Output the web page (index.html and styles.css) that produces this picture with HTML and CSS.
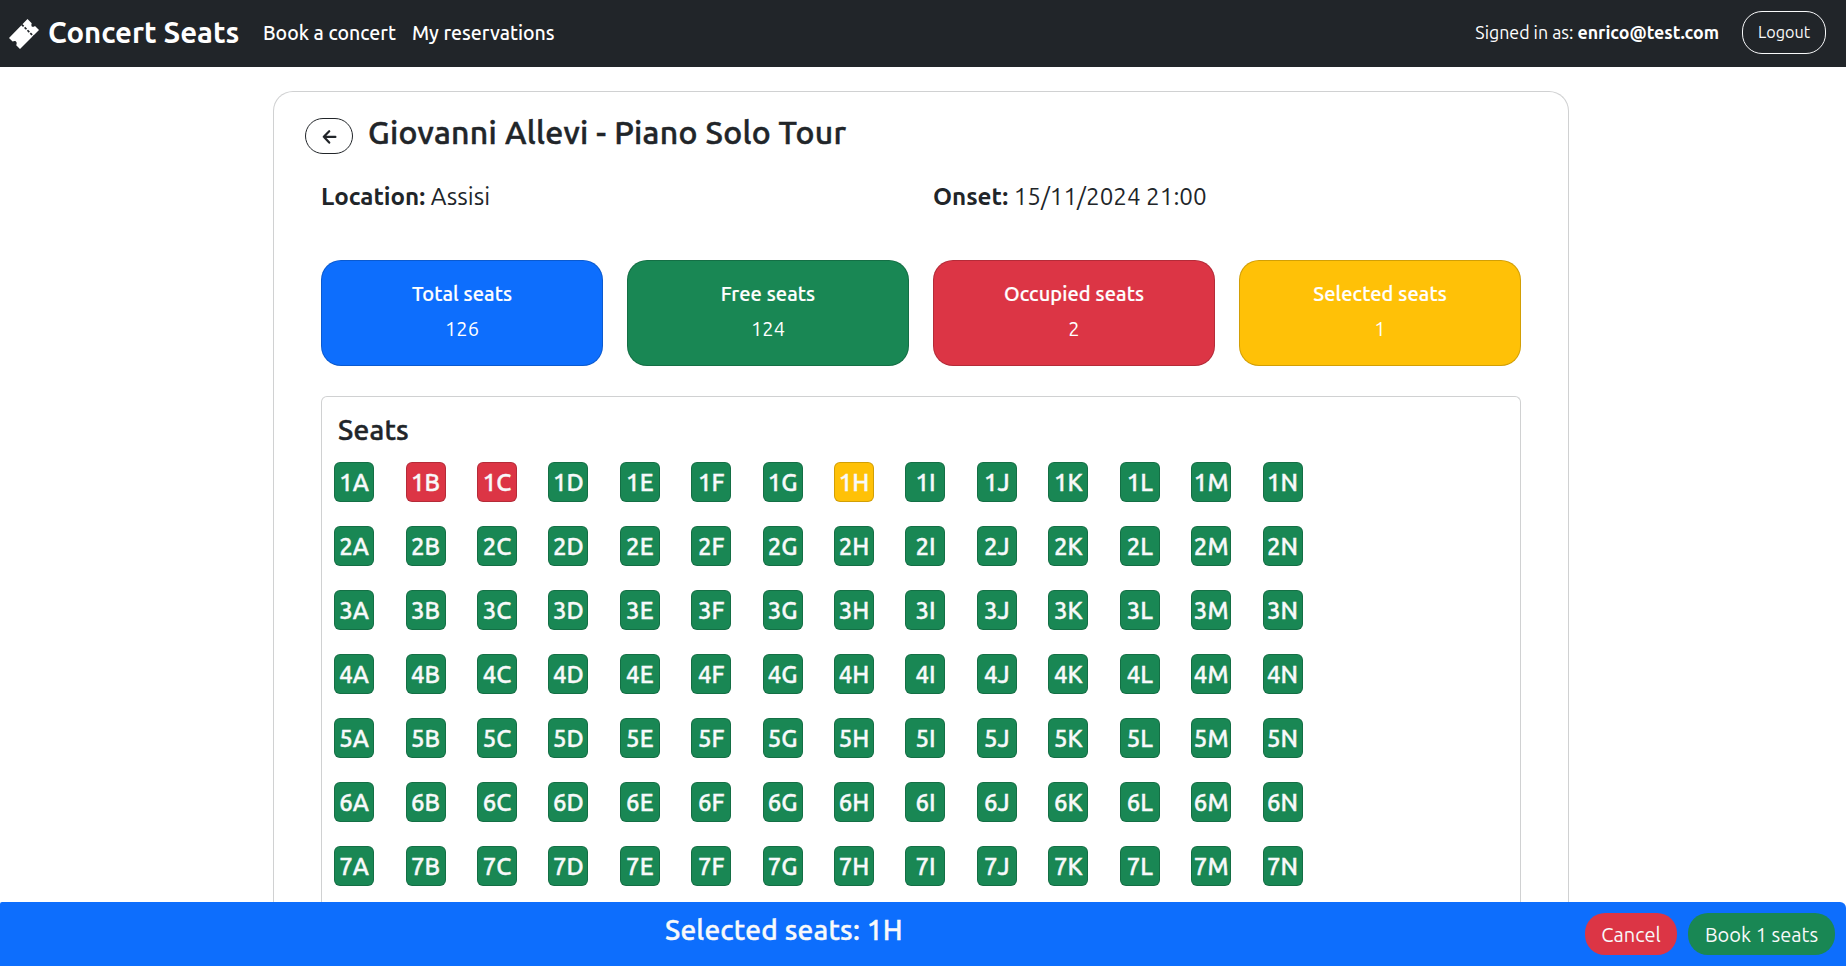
FILE: index.html
```
<!DOCTYPE html>
<html lang="en">
<head>
<meta charset="utf-8">
<title>Concert Seats</title>
<link rel="stylesheet" href="styles.css">
</head>
<body>
<header class="navbar">
  <svg class="brand-icon" viewBox="0 0 30 30"><path d="M18.5 0L22.7 4.2C21.6 7.6 23.4 8.8 26 7L30 11L11 30L7.2 26.2C8.8 23 6.4 21 3.6 22.6L0 19Z" fill="#fff"/><path d="M12.8 5.6L24.8 17.6" stroke="#212529" stroke-width="1.7" stroke-dasharray="2.6 1.4"/></svg>
  <span class="brand">Concert Seats</span>
  <nav class="links"><a class="link-book">Book a concert</a><a class="link-mine">My reservations</a></nav>
  <span class="signed">Signed in as: <b>enrico@test.com</b></span>
  <button class="logout">Logout</button>
</header>
<main class="concert">
  <div class="heading">
    <button class="back"><svg viewBox="0 0 16 16"><path d="M8.2 3.2L2.8 8.8L8.2 14.6M3 8.9H14.4" fill="none" stroke="#212529" stroke-width="2.2" stroke-linecap="round" stroke-linejoin="round"/></svg></button>
    <h2 class="title">Giovanni Allevi - Piano Solo Tour</h2>
  </div>
  <div class="info">
    <div class="info-item"><b>Location:</b> Assisi</div>
    <div class="info-item"><b>Onset:</b> 15/11/2024 21:00</div>
  </div>
  <div class="stats">
    <div class="stat total"><div class="label">Total seats</div><div class="value">126</div></div>
    <div class="stat free"><div class="label">Free seats</div><div class="value">124</div></div>
    <div class="stat occupied"><div class="label">Occupied seats</div><div class="value">2</div></div>
    <div class="stat selected"><div class="label">Selected seats</div><div class="value">1</div></div>
  </div>
  <section class="seats">
    <h3 class="seats-title">Seats</h3>
    <div class="grid" id="grid"></div>
  </section>
</main>
<footer class="bar">
  <div class="bar-text">Selected seats: 1H</div>
  <button class="pill cancel">Cancel</button>
  <button class="pill book">Book 1 seats</button>
</footer>
<script src="seats.js"></script>
</body>
</html>
```
FILE: styles.css
```
* { box-sizing: border-box; }
body { margin: 0; height: 966px; overflow: hidden; display: flex; flex-direction: column; background: #fff; color: #212529; font-family: Ubuntu, "Noto Sans", sans-serif; }
button { font-family: inherit; padding: 0; margin: 0; }
h2, h3 { margin: 0; font-weight: 500; }
.navbar { height: 67px; flex: none; background: #212529; color: #fff; display: flex; align-items: center; padding: 0 20px 0 9px; white-space: nowrap; }
.brand-icon { width: 30px; height: 30px; flex: none; }
.brand { width: 215px; margin-left: 9px; font-size: 29.3px; font-weight: 700; line-height: 36px; margin-bottom: 1px; }
.links { display: flex; font-size: 19.5px; font-weight: 500; line-height: 26px; margin-bottom: 2px; }
.link-book { width: 149px; }
.signed { margin-left: auto; font-size: 17.8px; line-height: 24px; margin-bottom: 3px; }
.logout { width: 84px; height: 43px; margin-left: 23px; margin-bottom: 2px; padding-bottom: 2px; border: 1px solid #f8f9fa; border-radius: 20px; background: transparent; color: #f8f9fa; font-size: 16.2px; }
.concert { width: 1296px; flex: 1; min-height: 0; display: flex; flex-direction: column; margin: 24px 0 0 273px; border: 1px solid #d0d1d2; border-bottom: 0; border-radius: 20px 20px 0 0; padding: 21px 47px 0; }
.heading { display: flex; height: 41px; margin-left: -16px; }
.back { width: 48px; height: 36px; margin-top: 5px; border: 1px solid #212529; border-radius: 18px; background: #fff; display: flex; align-items: center; justify-content: center; }
.back svg { width: 16px; height: 16px; }
.title { margin-left: 15px; font-size: 32px; line-height: 38px; letter-spacing: .29px; -webkit-text-stroke: .5px currentColor; }
.info { display: grid; grid-template-columns: 612px 1fr; margin: 27px 0 49px; font-size: 24.2px; line-height: 30px; }
.stats { display: grid; grid-template-columns: repeat(4, 282px); gap: 24px; }
.stat { height: 106px; padding-top: 21px; border: 1px solid rgba(0, 0, 0, .175); border-radius: 20px; color: #fff; text-align: center; font-size: 20px; line-height: 24px; }
.label { font-weight: 500; letter-spacing: .1px; margin-bottom: 11px; -webkit-text-stroke: .2px currentColor; }
.total { background: #0d6efd; }
.free { background: #198754; }
.occupied { background: #dc3545; }
.selected { background: #ffc107; }
.seats { flex: 1; min-height: 0; margin-top: 30px; padding: 16px 12.1px 0; border: 1px solid #d0d1d2; border-bottom: 0; border-radius: 6px 6px 0 0; }
.seats-title { margin-left: 4px; font-size: 28px; line-height: 34px; letter-spacing: .2px; -webkit-text-stroke: .5px currentColor; }
.grid { display: grid; grid-template-columns: repeat(14, 71.43px); row-gap: 24px; margin-top: 15px; }
.seat { width: 40px; height: 40px; border: 1px solid rgba(0, 0, 0, .175); border-radius: 6px; color: #f8f9fa; font-size: 24px; font-weight: 500; line-height: 39px; display: flex; justify-content: center; -webkit-text-stroke: .4px currentColor; }
.bar { flex: none; height: 64px; padding-right: 11px; background: #0d6efd; border-radius: 2px 6px 0 0; color: #f8f9fa; display: flex; align-items: center; }
.bar-text { flex: 1; padding-left: 665px; font-size: 28px; font-weight: 500; line-height: 34px; letter-spacing: .2px; margin-bottom: 8px; -webkit-text-stroke: .4px currentColor; }
.pill { height: 42px; border: 0; border-radius: 20px; color: #f8f9fa; font-size: 20px; }
.cancel { width: 92px; background: #dc3545; margin-right: 11px; }
.book { width: 147px; background: #198754; }
```
FILE: seats.js
```
const grid = document.getElementById('grid');
const states = { '1B': 'occupied', '1C': 'occupied', '1H': 'selected' };
for (let row = 1; row <= 7; row++) {
  for (const letter of 'ABCDEFGHIJKLMN') {
    const seat = document.createElement('div');
    const name = row + letter;
    seat.className = 'seat ' + (states[name] || 'free');
    seat.textContent = name;
    grid.appendChild(seat);
  }
}
```
